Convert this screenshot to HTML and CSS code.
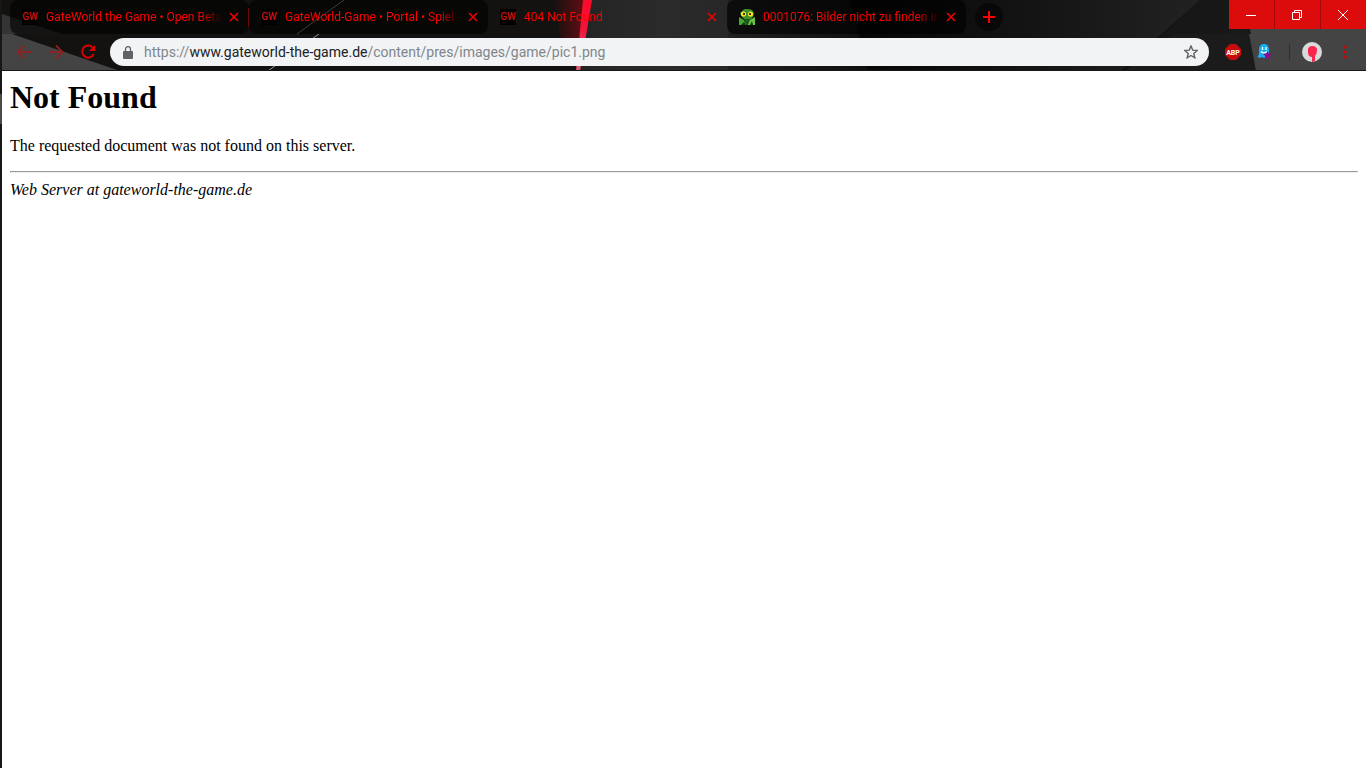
FILE: index.html
```html
<!DOCTYPE html>
<html lang="de">
<head>
<meta charset="utf-8">
<title>404 Not Found</title>
<link rel="stylesheet" href="styles.css">
</head>
<body>
<div class="window">
  <header class="chrome">
    <svg class="theme" viewBox="0 0 1366 71" preserveAspectRatio="none" aria-hidden="true">
      <defs>
        <linearGradient id="glow"><stop offset="0" stop-color="#8a0b12" stop-opacity="0"/><stop offset=".75" stop-color="#8a0b12" stop-opacity=".6"/><stop offset="1" stop-color="#8a0b12" stop-opacity=".9"/></linearGradient>
        <linearGradient id="slate"><stop offset="0" stop-color="#242424"/><stop offset=".3" stop-color="#2b2b2b"/><stop offset="1" stop-color="#1e1e1e"/></linearGradient>
        <linearGradient id="fade"><stop offset="0" stop-color="#202020"/><stop offset="1" stop-color="#0f0f0f"/></linearGradient>
        <linearGradient id="dusk"><stop offset="0" stop-color="#050505"/><stop offset="1" stop-color="#222"/></linearGradient>
        <linearGradient id="beam" x2="0" y2="1"><stop offset="0" stop-color="#ff0a2c"/><stop offset=".4" stop-color="#f01538"/><stop offset="1" stop-color="#e4607b"/></linearGradient>
      </defs>
      <rect width="1366" height="71" fill="#131211"/>
      <path d="M2 14 62 34H2Z" fill="#343434"/>
      <path d="M2 34H12L120 71H2Z" fill="#444"/>
      <path d="M588 0H740L870 71H578Z" fill="url(#slate)"/>
      <path d="M728 0H850L868 71H728Z" fill="url(#fade)"/>
      <path d="M850 0H1200L1120 71H868Z" fill="url(#dusk)"/>
      <path d="M1200 0H1243L1257 71H1125Z" fill="#171717"/>
      <path d="M1173 34H1249L1256 71H1125Z" fill="#1b1b1b"/>
      <path d="M1243 0H1366V71H1256L1249 34Z" fill="#444"/>
      <path d="M1229 29H1250L1251 34H1225Z" fill="#191919"/>
      <path d="M553 0H590L579 38H561Z" fill="url(#glow)"/>
      <path d="M583 0H592L580 71H576Z" fill="url(#beam)"/>
      <path d="M344 0 297 34M319 34 268 71" stroke="#999" fill="none"/>
      <path d="M0 0H2V71H0ZM0 70H1366V71H0Z" fill="#171717"/>
    </svg>
    <div class="topbar">
      <nav class="tabs" aria-label="Tabs">
        <div class="tab tab-ruled"><span class="gw">GW</span><a class="tab-title" href="#">GateWorld the Game • Open Beta</a><button class="close" aria-label="Close tab"><svg width="10" height="10" viewBox="0 0 10 10"><path d="m1 1 8 8M9 1 1 9"/></svg></button></div>
        <div class="tab"><span class="gw">GW</span><a class="tab-title" href="#">GateWorld-Game • Portal • Spiel</a><button class="close" aria-label="Close tab"><svg width="10" height="10" viewBox="0 0 10 10"><path d="m1 1 8 8M9 1 1 9"/></svg></button></div>
        <div class="tab tab-active"><span class="gw">GW</span><a class="tab-title" href="#" aria-current="page">404 Not Found</a><button class="close" aria-label="Close tab"><svg width="10" height="10" viewBox="0 0 10 10"><path d="m1 1 8 8M9 1 1 9"/></svg></button></div>
        <div class="tab"><svg class="bug" width="16" height="16" viewBox="0 0 16 16"><path d="M4 1 6 0h4l3 1 2 3-1 4-3 3H6L3 8 1 4Z" fill="#3c8d2c"/><path d="M6 10h5v6H5Z" fill="#1d5c1a"/><path d="M0 8 5 11 7 16H0Z" fill="#42a832"/><path d="M16 8 11 11 9 16h7Z" fill="#6bc34a"/><path d="m2 16 3-3 2 3ZM11 16l2-4 1 4Z" fill="#12380f"/><circle cx="4.500" cy="5" r="2.600" fill="#f4e51c"/><circle cx="11.500" cy="5" r="2.600" fill="#f4e51c"/><path d="M4 4h2v2H4ZM10 4h2v2h-2Z" fill="#413505"/></svg><a class="tab-title" href="#">0001076: Bilder nicht zu finden in</a><button class="close" aria-label="Close tab"><svg width="10" height="10" viewBox="0 0 10 10"><path d="m1 1 8 8M9 1 1 9"/></svg></button></div>
        <button class="new-tab" aria-label="New tab"><svg width="12" height="12" viewBox="0 0 12 12"><path d="M6 0v12M0 6h12"/></svg></button>
      </nav>
      <div class="controls">
        <button aria-label="Minimize"><svg width="10" height="10" viewBox="0 0 10 10"><path d="M0 5.500h10"/></svg></button>
        <button aria-label="Restore"><svg width="10" height="10" viewBox="0 0 10 10"><path d="M.5 2.500h7v7h-7ZM2.500 2.500v-2h7v7h-2"/></svg></button>
        <button aria-label="Close"><svg width="10" height="10" viewBox="0 0 10 10"><path d="m0 0 10 10M10 0 0 10"/></svg></button>
      </div>
    </div>
    <div class="toolbar">
      <div class="nav-buttons">
        <button aria-label="Back"><svg width="16" height="16" viewBox="0 0 16 16"><path d="M15 8H2M8 1.500 1.500 8 8 14.500"/></svg></button>
        <button aria-label="Forward"><svg width="16" height="16" viewBox="0 0 16 16"><path d="M1 8h13M8 1.500 14.500 8 8 14.500"/></svg></button>
        <button class="reload" aria-label="Reload"><svg width="16" height="16" viewBox="0 0 16 16"><path d="M13 4A6 6 0 1 0 13.700 10"/><path class="solid" d="M15 1v6H9Z"/></svg></button>
      </div>
      <div class="address-bar">
        <svg width="10" height="13" viewBox="0 0 10 13"><path d="M1 5h8q1 0 1 1v6q0 1-1 1H1q-1 0-1-1V6q0-1 1-1Z" fill="#5f6368"/><path d="M2.500 5V3.200a2.500 2.500 0 0 1 5 0V5" fill="none" stroke="#5f6368" stroke-width="1.300"/></svg>
        <div class="url" role="textbox" aria-label="Address" tabindex="0">https://<span>www.gateworld-the-game.de</span>/content/pres/images/game/pic1.png</div>
        <button class="star" aria-label="Bookmark this page"><svg width="14" height="14" viewBox="0 0 14 14"><path d="m7 1 1.700 4.100 4.500.4-3.400 2.900 1 4.400L7 10.500l-3.800 2.300 1-4.400L.8 5.500l4.500-.4Z" fill="none" stroke="#5f6368" stroke-width="1.400"/></svg></button>
      </div>
      <div class="extensions">
        <button class="abp" aria-label="Adblock Plus"><svg width="16" height="16" viewBox="0 0 16 16"><path d="M5 0h6l5 5v6l-5 5H5l-5-5V5Z" fill="#c60b0b"/><text x="8" y="11" text-anchor="middle">ABP</text></svg></button>
        <button aria-label="Ghostery"><svg width="16" height="16" viewBox="0 0 16 16"><path d="M2 6C2 2 4 0 7 0s5 2 5 6v5l-1 3-2-1-2 1-2-1-2 1-2-1-1 1 2-4Z" fill="#16aef0"/><path d="M5.500 3v3M9 3v3M4 7.500q3 3 6 0" stroke="#fff" stroke-width="1.300" fill="none"/><path d="m10.500 7 1.300 2.500 3.200.3-2.200 2.200.6 3.200-2.900-1.500-2.900 1.500.6-3.200L6 9.800l3.200-.3Z" fill="#8b0a91"/></svg></button>
        <span class="divider"></span>
        <button class="profile" aria-label="Profile"><svg width="20" height="20" viewBox="0 0 20 20"><circle cx="10" cy="10" r="10" fill="#d9d9d9"/><path d="M6 7q1-3 4-3 5 0 5 4 0 4-2 6v5l-3 1v-5q-4 0-4-5Z" fill="#fb244d"/></svg></button>
        <button class="menu" aria-label="Menu"><svg width="4" height="14" viewBox="0 0 4 14"><circle cx="2" cy="2" r="1.500"/><circle cx="2" cy="7" r="1.500"/><circle cx="2" cy="12" r="1.500"/></svg></button>
      </div>
    </div>
  </header>
  <main class="document">
    <h1>Not Found</h1>
    <p>The requested document was not found on this server.</p>
    <hr>
    <address>Web Server at gateworld-the-game.de</address>
  </main>
</div>
</body>
</html>
```

FILE: styles.css
```css
* { box-sizing: border-box; }
body { margin: 0; background: #fff; }
button { border: 0; padding: 0; background: none; color: inherit; display: flex; align-items: center; justify-content: center; flex: none; }
a { color: inherit; text-decoration: none; }
svg { display: block; flex: none; }
.window { min-height: 100vh; display: flex; flex-direction: column; }
.chrome { position: relative; padding-bottom: 1px; font-family: Roboto, "Noto Sans", sans-serif; }
.theme { position: absolute; inset: 0; width: 100%; height: 100%; }
.topbar { position: relative; height: 34px; display: flex; justify-content: space-between; align-items: flex-start; }
.tabs { display: flex; flex: 1; min-width: 0; height: 34px; padding-left: 10px; align-items: center; }
.tab { position: relative; flex: 0 1 239px; min-width: 0; height: 34px; display: flex; align-items: center; padding: 0 7px 0 12px; border-radius: 8px; background: rgba(0, 0, 0, .6); color: #ff0000; font-size: 12px; }
.tab-active { background: none; }
.tab-ruled::after { content: ""; position: absolute; right: 0; top: 8px; width: 1px; height: 19px; background: #700b0b; }
.tab-title { flex: 1; min-width: 0; margin: 0 3px 0 8px; overflow: hidden; white-space: nowrap; line-height: 20px; mask-image: linear-gradient(to right, #000 calc(100% - 24px), transparent); }
.gw { flex: none; width: 16px; height: 16px; background: #000; color: #d01212; font: 500 10px/16px Roboto, sans-serif; text-align: center; }
.close { width: 16px; height: 16px; }
.close path { stroke: #f00000; stroke-width: 1.6; }
.new-tab { width: 28px; height: 28px; margin-left: 9px; border-radius: 50%; background: rgba(0, 0, 0, .5); }
.new-tab path { stroke: #f00; stroke-width: 2; }
.controls { display: flex; gap: 1px; background: #a40808; }
.controls button { width: 45px; height: 29px; padding-right: 1px; background: #dc0c0c; }
.controls path { fill: none; stroke: #fff; stroke-width: 1; }
.toolbar { position: relative; height: 36px; display: flex; align-items: center; }
.nav-buttons { display: flex; gap: 16px; padding: 0 14px 0 16px; }
.nav-buttons path { fill: none; stroke: #8d2222; stroke-width: 1.8; }
.nav-buttons .reload path { stroke: #d80000; stroke-width: 2; }
.nav-buttons .reload .solid { fill: #d80000; stroke: none; }
.address-bar { flex: 1; min-width: 0; height: 28px; display: flex; align-items: center; padding: 0 11px 0 13px; border-radius: 14px; background: #f1f3f4; }
.url { flex: 1; min-width: 0; margin: 0 11px; overflow: hidden; white-space: nowrap; color: #80868b; font-size: 14px; line-height: 20px; }
.url span { color: #202124; }
.extensions { display: flex; align-items: center; padding: 0 19px 0 16px; }
.abp { margin-right: 16px; }
.abp text { fill: #fff; font: bold 7px Roboto, sans-serif; }
.divider { width: 1px; height: 16px; margin: 0 12px 0 16px; background: #591c1c; }
.profile { margin-right: 21px; }
.menu circle { fill: #d80000; }
.document { flex: 1; padding: 8px 8px 8px 10px; background: linear-gradient(#171717 23px, #4a4a4a 23px 53px, #171717 53px) left / 2px 100% no-repeat #fff; color: #000; font-family: "Liberation Serif", serif; font-size: 16px; }
.document h1 { margin: 0 0 21px; font-size: 32px; line-height: 37px; }
.document p { margin: 0 0 16px; line-height: 18px; }
.document hr { margin: 0 0 8px; }
.document address { line-height: 18px; }
```
